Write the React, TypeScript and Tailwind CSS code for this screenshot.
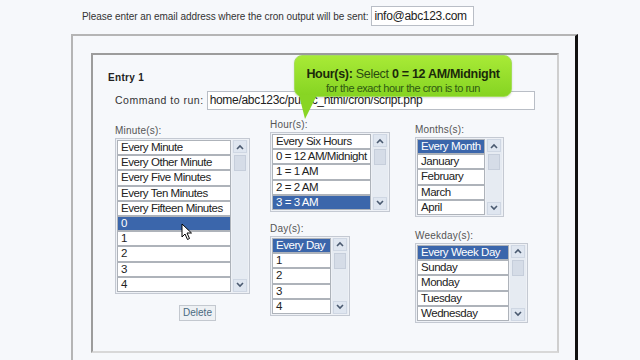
import React from "react";

const font = { fontFamily: '"Liberation Sans", Arial, sans-serif' };

interface ListProps {
  label: string;
  items: string[];
  selected?: number;
  width: string;
}

function Chevron({ up }: { up?: boolean }) {
  return (
    <svg width="8" height="6" viewBox="0 0 8 6" className="block">
      <path
        d={up ? "M1 5 L4 2 L7 5" : "M1 1 L4 4 L7 1"}
        fill="none"
        stroke="#4a5a70"
        strokeWidth="1.6"
      />
    </svg>
  );
}

function ListBox({ label, items, selected, width }: ListProps) {
  return (
    <div className="flex flex-col">
      <div className="text-[10px] leading-[12px] text-[#555] mb-[1px] tracking-[0.2px]">
        {label}
      </div>
      <div className={`flex border border-[#c4c9d2] bg-[#eef1f6] p-[1px] ${width}`}>
        <div className="flex-1 flex flex-col min-w-0">
          {items.map((it, i) => (
            <div
              key={it}
              className={
                "h-[15.2px] border border-[#aeb3ba] px-[3px] text-[11.5px] leading-[13px] whitespace-nowrap overflow-hidden tracking-[-0.45px] " +
                (i === selected
                  ? "bg-[#3b66ab] text-white"
                  : "bg-white text-[#222]")
              }
            >
              {it}
            </div>
          ))}
        </div>
        <div className="w-[16px] flex flex-col items-center bg-[#e6ebf2] ml-[1px]">
          <div className="w-[14px] h-[13px] flex items-center justify-center bg-[#dfe6f0] border border-[#cfd7e3]">
            <Chevron up />
          </div>
          <div className="w-[12px] h-[16px] mt-[2px] bg-[#d5dce7] border border-[#c6cedb]" />
          <div className="flex-1" />
          <div className="w-[14px] h-[13px] flex items-center justify-center bg-[#dfe6f0] border border-[#cfd7e3]">
            <Chevron />
          </div>
        </div>
      </div>
    </div>
  );
}

export default function App() {
  return (
    <div className="w-[640px] h-[360px] overflow-hidden bg-[#f6f8fb] relative" style={font}>
      {/* email row */}
      <div className="flex items-center pt-[6px] pl-[82px] gap-[3px]">
        <span className="text-[10px] text-[#333] tracking-[-0.05px]">
          Please enter an email address where the cron output will be sent:
        </span>
        <div className="w-[103px] h-[20px] border border-[#b9bec6] bg-white text-[12px] leading-[18px] px-[2px] text-[#222] tracking-[-0.3px]">
          info@abc123.com
        </div>
      </div>

      {/* outer box */}
      <div className="mt-[8px] ml-[71px] w-[507px] h-[340px] border-t-2 border-l-2 border-[#b5b5b5] border-r-[3px] border-r-[#111] pt-[17px] pl-[18px]">
        {/* inner box */}
        <div className="w-[468px] h-[300px] border-2 border-[#9c9c9c] border-r-[#cfcfcf] border-b-[#d8d8d8] pl-[15px] pt-[15px]">
          <div className="text-[10px] font-bold text-[#222] tracking-[0.3px]">Entry 1</div>

          <div className="flex items-center mt-[6px] pl-[7px] gap-[3px]">
            <span className="text-[10.5px] text-[#333] tracking-[0.5px]">Command to run:</span>
            <div className="w-[328px] h-[19px] border border-[#b9bec6] bg-white text-[12px] leading-[17px] px-[2px] text-[#222] whitespace-nowrap overflow-hidden tracking-[-0.3px]">
              home/abc123c/public_html/cron/script.php
            </div>
          </div>

          <div className="flex items-start pl-[7px]">
            {/* minute column */}
            <div className="flex flex-col items-center w-[155px] mt-[15px]">
              <div className="self-start">
                <ListBox
                  label="Minute(s):"
                  width="w-[135px]"
                  selected={5}
                  items={[
                    "Every Minute",
                    "Every Other Minute",
                    "Every Five Minutes",
                    "Every Ten Minutes",
                    "Every Fifteen Minutes",
                    "0",
                    "1",
                    "2",
                    "3",
                    "4",
                  ]}
                />
              </div>
              <button
                type="button"
                className="mt-[11px] ml-[10px] w-[37px] h-[16px] border border-[#c3c8cf] bg-[#eef1f4] text-[10px] leading-[14px] text-[#4a6a80]"
              >
                Delete
              </button>
            </div>

            {/* hour / day column */}
            <div className="flex flex-col w-[145px] mt-[9px]">
              <ListBox
                label="Hour(s):"
                width="w-[120px]"
                selected={4}
                items={["Every Six Hours", "0 = 12 AM/Midnight", "1 = 1 AM", "2 = 2 AM", "3 = 3 AM"]}
              />
              <div className="mt-[11px]">
                <ListBox
                  label="Day(s):"
                  width="w-[80px]"
                  selected={0}
                  items={["Every Day", "1", "2", "3", "4"]}
                />
              </div>
            </div>

            {/* month / weekday column */}
            <div className="flex flex-col mt-[14px]">
              <ListBox
                label="Months(s):"
                width="w-[89px]"
                selected={0}
                items={["Every Month", "January", "February", "March", "April"]}
              />
              <div className="mt-[13px]">
                <ListBox
                  label="Weekday(s):"
                  width="w-[113px]"
                  selected={0}
                  items={["Every Week Day", "Sunday", "Monday", "Tuesday", "Wednesday"]}
                />
              </div>
            </div>
          </div>
        </div>
      </div>

      {/* tooltip */}
      <div className="absolute left-[294px] top-[55px] w-[218px] h-[42px] rounded-[8px] bg-gradient-to-b from-[#a8ea36] to-[#86d422] border border-[#a4dd5a] shadow-[0_1px_2px_rgba(0,0,0,0.15)] flex flex-col items-center pt-[11px]">
        <div className="text-[12.5px] leading-[15px] text-[#1b2a0a] tracking-[-0.3px]">
          <b>Hour(s):</b> <span className="text-[#2a4a10]">Select</span> <b>0 = 12 AM/Midnight</b>
        </div>
        <div className="text-[11px] leading-[13px] text-[#2f5a12] tracking-[-0.45px]">
          for the exact hour the cron is to run
        </div>
      </div>
      <svg className="absolute left-[297px] top-[95px]" width="24" height="25" viewBox="0 0 24 25">
        <path d="M2 0 L8 24 L20 0 Z" fill="#88d524" />
      </svg>

      {/* mouse cursor */}
      <svg className="absolute left-[181px] top-[223px]" width="12" height="18" viewBox="0 0 12 18">
        <path
          d="M1 1 L1 14 L4 11 L6.5 16.5 L8.5 15.5 L6 10 L10.5 10 Z"
          fill="#fff"
          stroke="#000"
          strokeWidth="1"
          strokeLinejoin="round"
        />
      </svg>
    </div>
  );
}
